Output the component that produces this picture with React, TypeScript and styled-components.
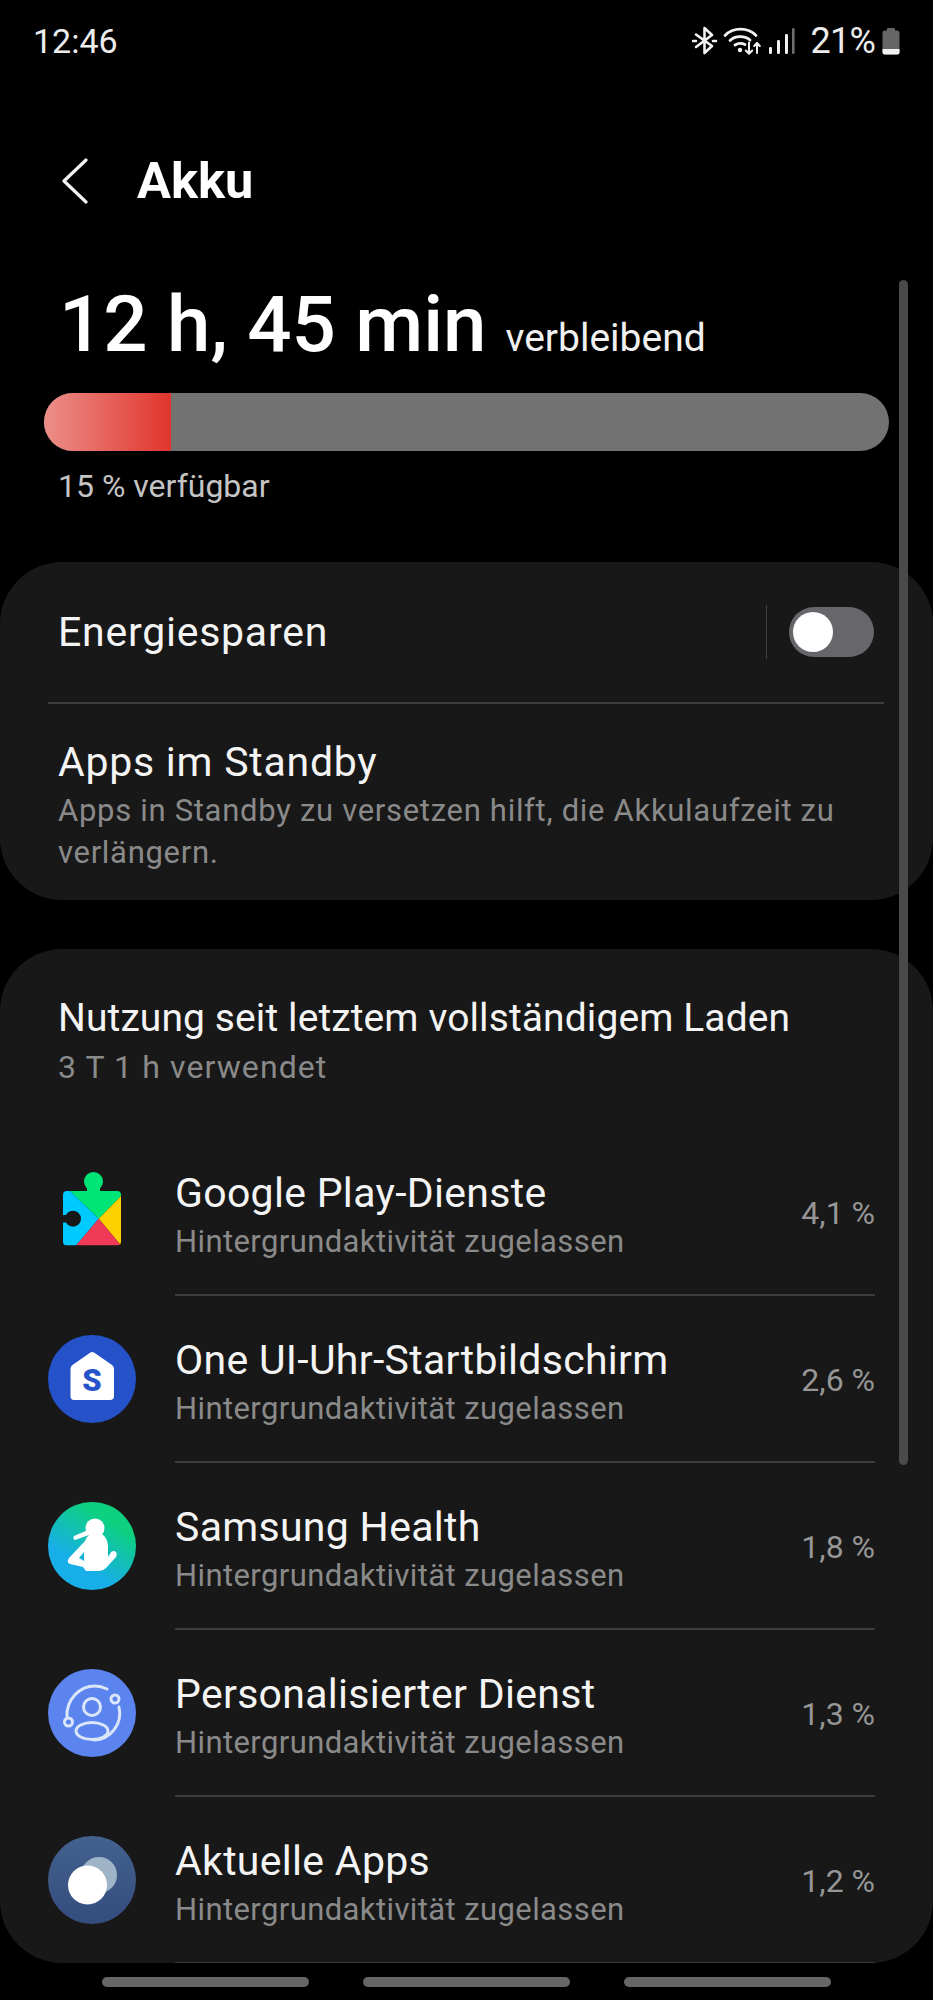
import React from "react";
import styled, { createGlobalStyle } from "styled-components";

const Global = createGlobalStyle`
  html, body { margin: 0; padding: 0; background: #000; }
  body { font-family: Roboto, "Liberation Sans", sans-serif; color: #f2f2f2; }
  * { box-sizing: border-box; }
`;

const Screen = styled.div`
  position: relative;
  width: 933px;
  height: 2000px;
  overflow: hidden;
  background: #000;
`;

const StatusBar = styled.div`
  height: 82px;
  display: flex;
  align-items: center;
  justify-content: space-between;
  padding: 0 33px;
  font-size: 34px;
  font-weight: 400;
  color: #ececec;
`;

const StatusRight = styled.div`
  display: flex;
  align-items: center;
`;

const BatteryText = styled.span`
  font-size: 36px;
  letter-spacing: -0.8px;
`;

const Header = styled.div`
  height: 198px;
  display: flex;
  align-items: center;
  padding-left: 62px;
`;

const Title = styled.h1`
  margin: 0 0 0 49px;
  font-size: 50.5px;
  font-weight: 700;
  line-height: 60px;
  color: #fff;
`;

const Remaining = styled.div`
  height: 113px;
  display: flex;
  align-items: baseline;
  padding-left: 59px;
  gap: 19px;
`;

const BigTime = styled.span`
  font-size: 78px;
  font-weight: 500;
  line-height: 90px;
  color: #fff;
`;

const Suffix = styled.span`
  font-size: 39px;
  color: #f0f0f0;
`;

const Bar = styled.div`
  margin-left: 44px;
  width: 845px;
  height: 58px;
  border-radius: 29px;
  background: #727272;
  overflow: hidden;
`;

const BarFill = styled.div`
  height: 100%;
  background: linear-gradient(90deg, #ec8f89 0%, #e0352d 100%);
`;

const Available = styled.div`
  padding-left: 58px;
  margin-top: 15px;
  height: 40px;
  line-height: 40px;
  font-size: 32px;
  color: #c4c4c4;
`;

const Card = styled.section`
  background: #181818;
  border-radius: 62px;
`;

const PowerCard = styled(Card)`
  margin-top: 56px;
  height: 338px;
`;

const ToggleRow = styled.div`
  height: 142px;
  margin: 0 49px 0 48px;
  padding: 0 10px 0 10px;
  display: flex;
  align-items: center;
  border-bottom: 2px solid #3c3c3c;
`;

const RowLabel = styled.div`
  flex: 1;
  font-size: 41px;
  letter-spacing: 0.75px;
  line-height: 48px;
  color: #f4f4f4;
`;

const VLine = styled.div`
  width: 1px;
  height: 54px;
  background: #3e3e3e;
  margin-right: 22px;
`;

const Toggle = styled.div`
  width: 85px;
  height: 50px;
  border-radius: 25px;
  background: #66666b;
  padding: 5px 0 0 4px;
`;

const Thumb = styled.div`
  width: 40px;
  height: 40px;
  border-radius: 50%;
  background: #fff;
`;

const StandbyBlock = styled.div`
  padding: 34px 58px 0;
`;

const SubText = styled.div`
  font-size: 31px;
  letter-spacing: 0.7px;
  line-height: 42px;
  color: #8a8a8a;
  margin-top: 4px;
`;

const UsageCard = styled(Card)`
  margin-top: 49px;
  height: 1014px;
  overflow: hidden;
`;

const UsageHead = styled.div`
  height: 180px;
  padding: 45px 58px 0;
`;

const UsageTitle = styled.div`
  font-size: 39px;
  letter-spacing: 0.1px;
  line-height: 48px;
  color: #f4f4f4;
`;

const UsageSub = styled.div`
  font-size: 32px;
  letter-spacing: 1.1px;
  line-height: 48px;
  margin-top: 1px;
  color: #8a8a8a;
`;

const AppRow = styled.div`
  height: 167px;
  display: flex;
  padding-left: 48px;
`;

const IconSlot = styled.div`
  width: 88px;
  height: 88px;
  margin-top: 39px;
  margin-right: 39px;
  flex: none;
`;

const AppBody = styled.div`
  flex: 1;
  margin-right: 58px;
  display: flex;
  align-items: flex-start;
  border-bottom: 2px solid #3c3c3c;
`;

const AppText = styled.div`
  flex: 1;
  padding-top: 40px;
`;

const AppName = styled.div`
  font-size: 41px;
  letter-spacing: 0.3px;
  line-height: 48px;
  color: #f4f4f4;
`;

const AppNote = styled.div`
  font-size: 31px;
  letter-spacing: 0.4px;
  line-height: 49px;
  color: #8a8a8a;
`;

const Percent = styled.div`
  font-size: 32px;
  line-height: 40px;
  margin-top: 64px;
  color: #969696;
`;

const Scrollbar = styled.div`
  position: absolute;
  left: 899px;
  top: 280px;
  width: 9px;
  height: 1185px;
  border-radius: 5px;
  background: #4a4a4a;
`;

const NavBar = styled.div`
  display: flex;
  justify-content: center;
  gap: 54px;
  padding-top: 14px;
`;

const NavPill = styled.div`
  width: 207px;
  height: 10px;
  border-radius: 5px;
  background: #666;
`;

const StatusIcons = () => (
  <svg width="112" height="32" viewBox="0 0 112 32" style={{ marginRight: 7 }}>
    <g fill="none" stroke="#f2f2f2" strokeWidth="2.6" strokeLinejoin="round" strokeLinecap="round">
      <path d="M4 9.5 L20 21 L12.5 28 V3 L20 10 L4 22" />
      <path d="M1 16h3M21 16h3" />
    </g>
    <g fill="none" stroke="#f2f2f2" strokeWidth="2.8" strokeLinecap="round">
      <path d="M33 10.5 C41 2 56 2 64 10.5" />
      <path d="M38 15.5 C43 10.5 53 10.5 58 15" />
      <path d="M43 20 C46 18 50 18 53 19.5" />
    </g>
    <circle cx="48" cy="25" r="2.2" fill="#f2f2f2" />
    <g fill="none" stroke="#f2f2f2" strokeWidth="2" strokeLinecap="round" strokeLinejoin="round">
      <path d="M57 17.5 V28.5 M53.8 25.5 L57 28.8 L60.2 25.5" />
      <path d="M65 28 V18 M62.2 21 L65 18 L67.8 21" />
    </g>
    <g>
      <rect x="77" y="22" width="3" height="7" rx="1.2" fill="#f2f2f2" />
      <rect x="85" y="15" width="3" height="14" rx="1.2" fill="#f2f2f2" />
      <rect x="93" y="9" width="3" height="20" rx="1.2" fill="#f2f2f2" />
      <rect x="100" y="3" width="2.6" height="26" rx="1.2" fill="#6e6e6e" />
    </g>
  </svg>
);

const Battery = () => (
  <svg width="18" height="27" viewBox="0 0 18 27" style={{ marginLeft: 7 }}>
    <rect x="5" y="0" width="8" height="4" rx="1" fill="#666" />
    <rect x="0.5" y="2.5" width="17" height="24" rx="2.5" fill="#666" />
    <path d="M.5 21H17.5V24A2.5 2.5 0 0 1 15 26.5H3A2.5 2.5 0 0 1 .5 24Z" fill="#f2f2f2" />
  </svg>
);

const BackIcon = () => (
  <svg width="26" height="46" viewBox="0 0 26 46" fill="none" stroke="#f2f2f2" strokeWidth="3.2" strokeLinecap="round" strokeLinejoin="round">
    <path d="M24 2 L2 23 L24 44" />
  </svg>
);

const PlayServices = () => (
  <svg width="88" height="88" viewBox="0 0 88 88">
    <defs>
      <clipPath id="puz">
        <rect x="15" y="23" width="58" height="54.5" rx="4" />
        <circle cx="45.5" cy="13.5" r="9.5" />
        <rect x="39" y="14" width="13" height="12" />
      </clipPath>
    </defs>
    <g clipPath="url(#puz)">
      <path d="M15 2H73V28L50.7 50.7 22 23H15Z" fill="#00e676" />
      <path d="M15 23H22L50.7 50.7 28 77.5H15Z" fill="#00c9ff" />
      <path d="M73 28 L50.7 50.7 L73 77.5Z" fill="#ffd000" />
      <path d="M50.7 50.7 L73 77.5H28Z" fill="#f13a58" />
    </g>
    <circle cx="25" cy="50.7" r="8" fill="#181818" />
    <rect x="14" y="47" width="9" height="7.5" fill="#181818" />
  </svg>
);

const OneUiHome = () => (
  <svg width="88" height="88" viewBox="0 0 88 88">
    <circle cx="44" cy="44" r="44" fill="#2552c9" />
    <path d="M44 17 Q46 17 47.5 18.5 L64 30 Q66 31.5 66 34 V61 Q66 65 62 65 H26 Q22.5 65 22.5 61 V34 Q22.5 31.5 24.5 30 L41 18.5 Q42.5 17 44 17Z" fill="#fff" />
    <text x="44" y="56" textAnchor="middle" fontFamily="Roboto, sans-serif" fontWeight="900" fontSize="31" fill="#2552c9">S</text>
  </svg>
);

const Health = () => (
  <svg width="88" height="88" viewBox="0 0 88 88">
    <defs>
      <linearGradient id="hg" x1="0.8" y1="0.1" x2="0.3" y2="0.9">
        <stop offset="0.15" stopColor="#0dd17f" />
        <stop offset="0.8" stopColor="#18aee8" />
      </linearGradient>
    </defs>
    <circle cx="44" cy="44" r="44" fill="url(#hg)" />
    <circle cx="47" cy="26" r="9.5" fill="#fff" />
    <path d="M40 28 L26 34 Q24.5 36.5 27 38 L41 33Z" fill="#fff" />
    <path
      d="M39 35 L37 39 L21 56 Q18 60 22 62 L35 65 L38 69 H51 Q55 69 58 66 L68 55 Q70 50 66 49 Q63 49 62 52 L60 55 Q60 50 60 44 Q59 35 54 32 H42Z M36 50 L31 56 L36 59Z"
      fill="#fff"
      fillRule="evenodd"
    />
  </svg>
);

const Personal = () => (
  <svg width="88" height="88" viewBox="0 0 88 88">
    <circle cx="44" cy="44" r="44" fill="#5b84ef" />
    <g fill="none" stroke="#dbe6fb" strokeWidth="3">
      <circle cx="44" cy="38" r="8.5" />
      <ellipse cx="44" cy="62" rx="16" ry="8.5" />
      <path d="M19 48 C18 30 32 17 47 17 C51 17 55 18 59 20" strokeLinecap="round" />
      <path d="M71 38 C75 55 62 71 46 71" strokeLinecap="round" />
      <circle cx="67" cy="30" r="4" />
      <circle cx="20.5" cy="53" r="4" />
    </g>
  </svg>
);

const Recent = () => (
  <svg width="88" height="88" viewBox="0 0 88 88">
    <defs>
      <linearGradient id="rg" x1="0" y1="0" x2="0" y2="1">
        <stop offset="0" stopColor="#44618e" />
        <stop offset="1" stopColor="#334d7e" />
      </linearGradient>
    </defs>
    <circle cx="44" cy="44" r="44" fill="url(#rg)" />
    <circle cx="51" cy="39" r="18" fill="#a0b4c8" />
    <circle cx="39.5" cy="49" r="19.5" fill="#fff" />
  </svg>
);

const apps = [
  { name: "Google Play-Dienste", value: "4,1 %", Icon: PlayServices },
  { name: "One UI-Uhr-Startbildschirm", value: "2,6 %", Icon: OneUiHome },
  { name: "Samsung Health", value: "1,8 %", Icon: Health },
  { name: "Personalisierter Dienst", value: "1,3 %", Icon: Personal },
  { name: "Aktuelle Apps", value: "1,2 %", Icon: Recent },
];

export default function App() {
  return (
    <Screen>
      <Global />
      <StatusBar>
        <span>12:46</span>
        <StatusRight>
          <StatusIcons />
          <BatteryText>21%</BatteryText>
          <Battery />
        </StatusRight>
      </StatusBar>
      <Header>
        <BackIcon />
        <Title>Akku</Title>
      </Header>
      <Remaining>
        <BigTime>12 h, 45 min</BigTime>
        <Suffix>verbleibend</Suffix>
      </Remaining>
      <Bar>
        <BarFill style={{ width: `${(127 / 845) * 100}%` }} />
      </Bar>
      <Available>15 % verfügbar</Available>
      <PowerCard>
        <ToggleRow>
          <RowLabel>Energiesparen</RowLabel>
          <VLine />
          <Toggle>
            <Thumb />
          </Toggle>
        </ToggleRow>
        <StandbyBlock>
          <RowLabel>Apps im Standby</RowLabel>
          <SubText>
            Apps in Standby zu versetzen hilft, die Akkulaufzeit zu
            <br />
            verlängern.
          </SubText>
        </StandbyBlock>
      </PowerCard>
      <UsageCard>
        <UsageHead>
          <UsageTitle>Nutzung seit letztem vollständigem Laden</UsageTitle>
          <UsageSub>3 T 1 h verwendet</UsageSub>
        </UsageHead>
        {apps.map(({ name, value, Icon }) => (
          <AppRow key={name}>
            <IconSlot>
              <Icon />
            </IconSlot>
            <AppBody>
              <AppText>
                <AppName>{name}</AppName>
                <AppNote>Hintergrundaktivität zugelassen</AppNote>
              </AppText>
              <Percent>{value}</Percent>
            </AppBody>
          </AppRow>
        ))}
      </UsageCard>
      <NavBar>
        <NavPill />
        <NavPill />
        <NavPill />
      </NavBar>
      <Scrollbar />
    </Screen>
  );
}
